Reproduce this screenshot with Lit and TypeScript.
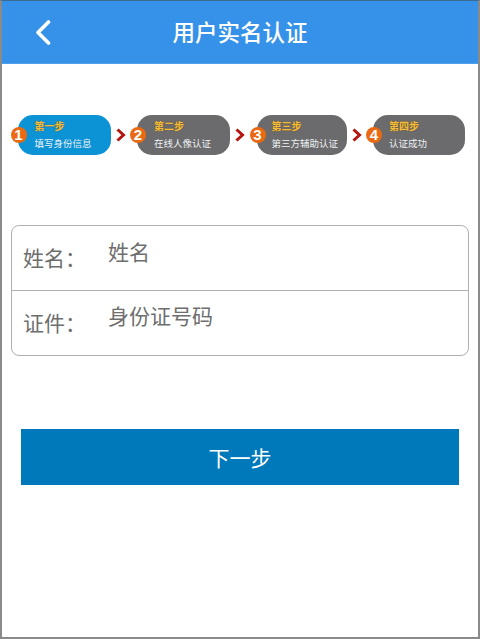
import { LitElement, html, css } from "lit";
import { customElement } from "lit/decorators.js";

const steps = [
  { n: 1, title: "第一步", text: "填写身份信息", cls: "active" },
  { n: 2, title: "第二步", text: "在线人像认证", cls: "" },
  { n: 3, title: "第三步", text: "第三方辅助认证", cls: "third" },
  { n: 4, title: "第四步", text: "认证成功", cls: "fourth" },
];

@customElement("app-root")
export class AppRoot extends LitElement {
  static styles = css`
    :host {
      display: block;
      width: 480px;
      height: 639px;
      box-sizing: border-box;
      border: 2px solid #8a8a8a;
      border-top: 1px solid #3c6a8f;
      background: #fff;
      font-family: "Noto Sans CJK SC", "Liberation Sans", sans-serif;
      overflow: hidden;
    }
    .bar {
      height: 63px;
      background: #3592e8;
      display: flex;
      align-items: center;
      justify-content: center;
      position: relative;
      box-sizing: border-box;
      border-bottom: 1px solid #4f9fe6;
    }
    .bar h1 {
      margin: 0 0 2px;
      color: #fff;
      font-size: 22.5px;
      font-weight: 500;
      line-height: 30px;
    }
    .back {
      position: absolute;
      left: 32px;
      top: 18px;
      width: 18px;
      height: 26px;
    }
    .steps {
      display: flex;
      align-items: center;
      margin: 51px 0 0 15.5px;
    }
    .pill {
      position: relative;
      width: 93px;
      height: 40px;
      box-sizing: border-box;
      border-radius: 15px;
      background: #6b6a6c;
      padding: 4px 0 0 17px;
      display: flex;
      flex-direction: column;
    }
    .pill.active {
      background: #0b93d5;
    }
    .pill.third {
      width: 90px;
      padding-left: 15px;
    }
    .pill.fourth {
      width: 92px;
      padding-left: 16px;
    }
    .t {
      font-size: 10px;
      line-height: 14px;
      font-weight: 700;
      color: #f4bb3a;
      text-shadow: 0 0 1px #7a5a10;
    }
    .s {
      font-size: 9.5px;
      line-height: 14px;
      margin-top: 3px;
      color: #eef2f4;
      white-space: nowrap;
    }
    .badge {
      position: absolute;
      left: -7px;
      top: 12px;
      width: 16px;
      height: 16px;
      border-radius: 50%;
      background: #ea6a14;
      color: #fff;
      font-family: "Liberation Sans", sans-serif;
      font-size: 15px;
      font-weight: 700;
      line-height: 16px;
      text-align: center;
    }
    .arrow {
      width: 26.5px;
      height: 14px;
      display: flex;
      padding-left: 5px;
      box-sizing: border-box;
    }
    .arrow svg {
      width: 10px;
      height: 14px;
    }
    .form {
      margin: 70px 9px 0;
      height: 131px;
      box-sizing: border-box;
      border: 1px solid #b0b0b0;
      border-radius: 8px;
      display: flex;
      flex-direction: column;
    }
    .row {
      flex: 1;
      display: flex;
      color: #6e6e6e;
      font-size: 21px;
      line-height: 30px;
    }
    .row + .row {
      border-top: 1px solid #b0b0b0;
    }
    .label {
      width: 96px;
      padding: 16px 0 0 11px;
      box-sizing: border-box;
    }
    .ph {
      padding-top: 10px;
    }
    .row + .row .label {
      padding-top: 16px;
    }
    .row + .row .ph {
      padding-top: 9px;
    }
    .btn {
      margin: 73px 19px 0;
      height: 56px;
      background: #0079ba;
      color: #fff;
      font-size: 21px;
      display: flex;
      align-items: center;
      justify-content: center;
    }
  `;

  render() {
    return html`
      <div class="bar">
        <svg class="back" viewBox="0 0 18 26" fill="none">
          <path d="M14.5 3 L4 13.5 L14.5 24" stroke="#fff" stroke-width="3.6" stroke-linecap="round" stroke-linejoin="round" />
        </svg>
        <h1>用户实名认证</h1>
      </div>
      <div class="steps">
        ${steps.map(
          (s, i) => html`
            <div class="pill ${s.cls}">
              <span class="badge">${s.n}</span>
              <span class="t">${s.title}</span>
              <span class="s">${s.text}</span>
            </div>
            ${i < 3
              ? html`<div class="arrow">
                  <svg viewBox="0 0 10 14" fill="none">
                    <path d="M1.5 1.5 L7.5 7 L1.5 12.5" stroke="#b5140f" stroke-width="3" />
                  </svg>
                </div>`
              : ""}
          `
        )}
      </div>
      <div class="form">
        <div class="row"><span class="label">姓名：</span><span class="ph">姓名</span></div>
        <div class="row"><span class="label">证件：</span><span class="ph">身份证号码</span></div>
      </div>
      <div class="btn">下一步</div>
    `;
  }
}
